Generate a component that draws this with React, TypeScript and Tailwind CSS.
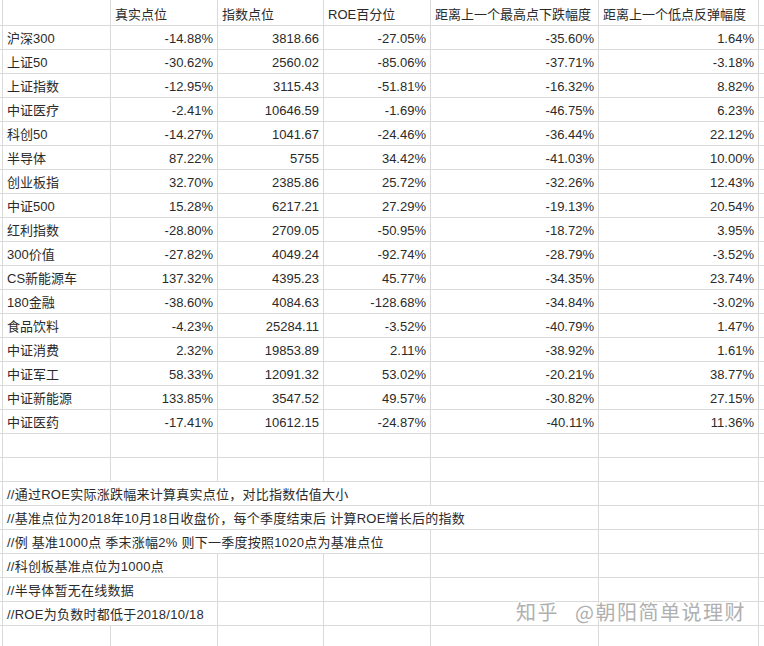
import React from "react";

const rows: string[][] = [
  ["沪深300", "-14.88%", "3818.66", "-27.05%", "-35.60%", "1.64%"],
  ["上证50", "-30.62%", "2560.02", "-85.06%", "-37.71%", "-3.18%"],
  ["上证指数", "-12.95%", "3115.43", "-51.81%", "-16.32%", "8.82%"],
  ["中证医疗", "-2.41%", "10646.59", "-1.69%", "-46.75%", "6.23%"],
  ["科创50", "-14.27%", "1041.67", "-24.46%", "-36.44%", "22.12%"],
  ["半导体", "87.22%", "5755", "34.42%", "-41.03%", "10.00%"],
  ["创业板指", "32.70%", "2385.86", "25.72%", "-32.26%", "12.43%"],
  ["中证500", "15.28%", "6217.21", "27.29%", "-19.13%", "20.54%"],
  ["红利指数", "-28.80%", "2709.05", "-50.95%", "-18.72%", "3.95%"],
  ["300价值", "-27.82%", "4049.24", "-92.74%", "-28.79%", "-3.52%"],
  ["CS新能源车", "137.32%", "4395.23", "45.77%", "-34.35%", "23.74%"],
  ["180金融", "-38.60%", "4084.63", "-128.68%", "-34.84%", "-3.02%"],
  ["食品饮料", "-4.23%", "25284.11", "-3.52%", "-40.79%", "1.47%"],
  ["中证消费", "2.32%", "19853.89", "2.11%", "-38.92%", "1.61%"],
  ["中证军工", "58.33%", "12091.32", "53.02%", "-20.21%", "38.77%"],
  ["中证新能源", "133.85%", "3547.52", "49.57%", "-30.82%", "27.15%"],
  ["中证医药", "-17.41%", "10612.15", "-24.87%", "-40.11%", "11.36%"],
];

const notes: { text: string; span: number }[] = [
  { text: "//通过ROE实际涨跌幅来计算真实点位，对比指数估值大小", span: 4 },
  { text: "//基准点位为2018年10月18日收盘价，每个季度结束后 计算ROE增长后的指数", span: 5 },
  { text: "//例 基准1000点 季末涨幅2% 则下一季度按照1020点为基准点位", span: 4 },
  { text: "//科创板基准点位为1000点", span: 2 },
  { text: "//半导体暂无在线数据", span: 2 },
  { text: "//ROE为负数时都低于2018/10/18", span: 2 },
];

const widths = [108, 107, 106, 107, 168, 160];
const gridCols = "grid grid-cols-[3px_108px_107px_106px_107px_168px_160px_1fr]";
const cell = "border-r border-[#dadada] flex items-end pb-[2px] px-[4px] whitespace-nowrap";
const rowCls = `${gridCols} h-[24px] border-b border-[#dadada]`;

function Row({ cells, header }: { cells: string[]; header?: boolean }) {
  return (
    <div className={`${gridCols} ${header ? "h-[26px]" : "h-[24px]"} border-b border-[#dadada]`}>
      <div className="border-r border-[#dadada]" />
      {cells.map((c, i) => (
        <div
          key={i}
          className={`${cell} ${header || i === 0 ? "justify-start" : "justify-end"}`}
        >
          {c}
        </div>
      ))}
      <div />
    </div>
  );
}

function EmptyRow() {
  return <Row cells={["", "", "", "", "", ""]} />;
}

export default function App() {
  return (
    <div
      className="relative w-[764px] h-[646px] overflow-hidden bg-white text-[13px] leading-[17px] text-[#2a2a2a]"
      style={{ fontFamily: '"Liberation Sans", "Noto Sans CJK SC", sans-serif' }}
    >
      <Row
        header
        cells={["", "真实点位", "指数点位", "ROE百分位", "距离上一个最高点下跌幅度", "距离上一个低点反弹幅度"]}
      />
      {rows.map((r, i) => (
        <Row key={i} cells={r} />
      ))}
      <EmptyRow />
      <EmptyRow />
      {notes.map((n, i) => {
        const spanW = widths.slice(0, n.span).reduce((a, b) => a + b, 0);
        return (
          <div key={i} className={rowCls}>
            <div className="border-r border-[#dadada]" />
            <div
              className={`${cell} justify-start tracking-[0.25px]`}
              style={{ gridColumn: `span ${n.span} / span ${n.span}`, width: spanW }}
            >
              {n.text}
            </div>
            {widths.slice(n.span).map((_, j) => (
              <div key={j} className={cell} />
            ))}
            <div />
          </div>
        );
      })}
      <EmptyRow />
      <div
        className="absolute left-[516px] top-[600px] text-[20px] leading-[24px] text-[#b0b0b0] whitespace-nowrap tracking-[1.5px]"
        style={{
          fontFamily: '"Noto Sans CJK SC", sans-serif',
          textShadow: "1px 1px 0 #fff, -1px -1px 0 #fff, 1px -1px 0 #fff, -1px 1px 0 #fff",
        }}
      >
        知乎 <span className="ml-[10px]">@朝阳简单说理财</span>
      </div>
    </div>
  );
}
